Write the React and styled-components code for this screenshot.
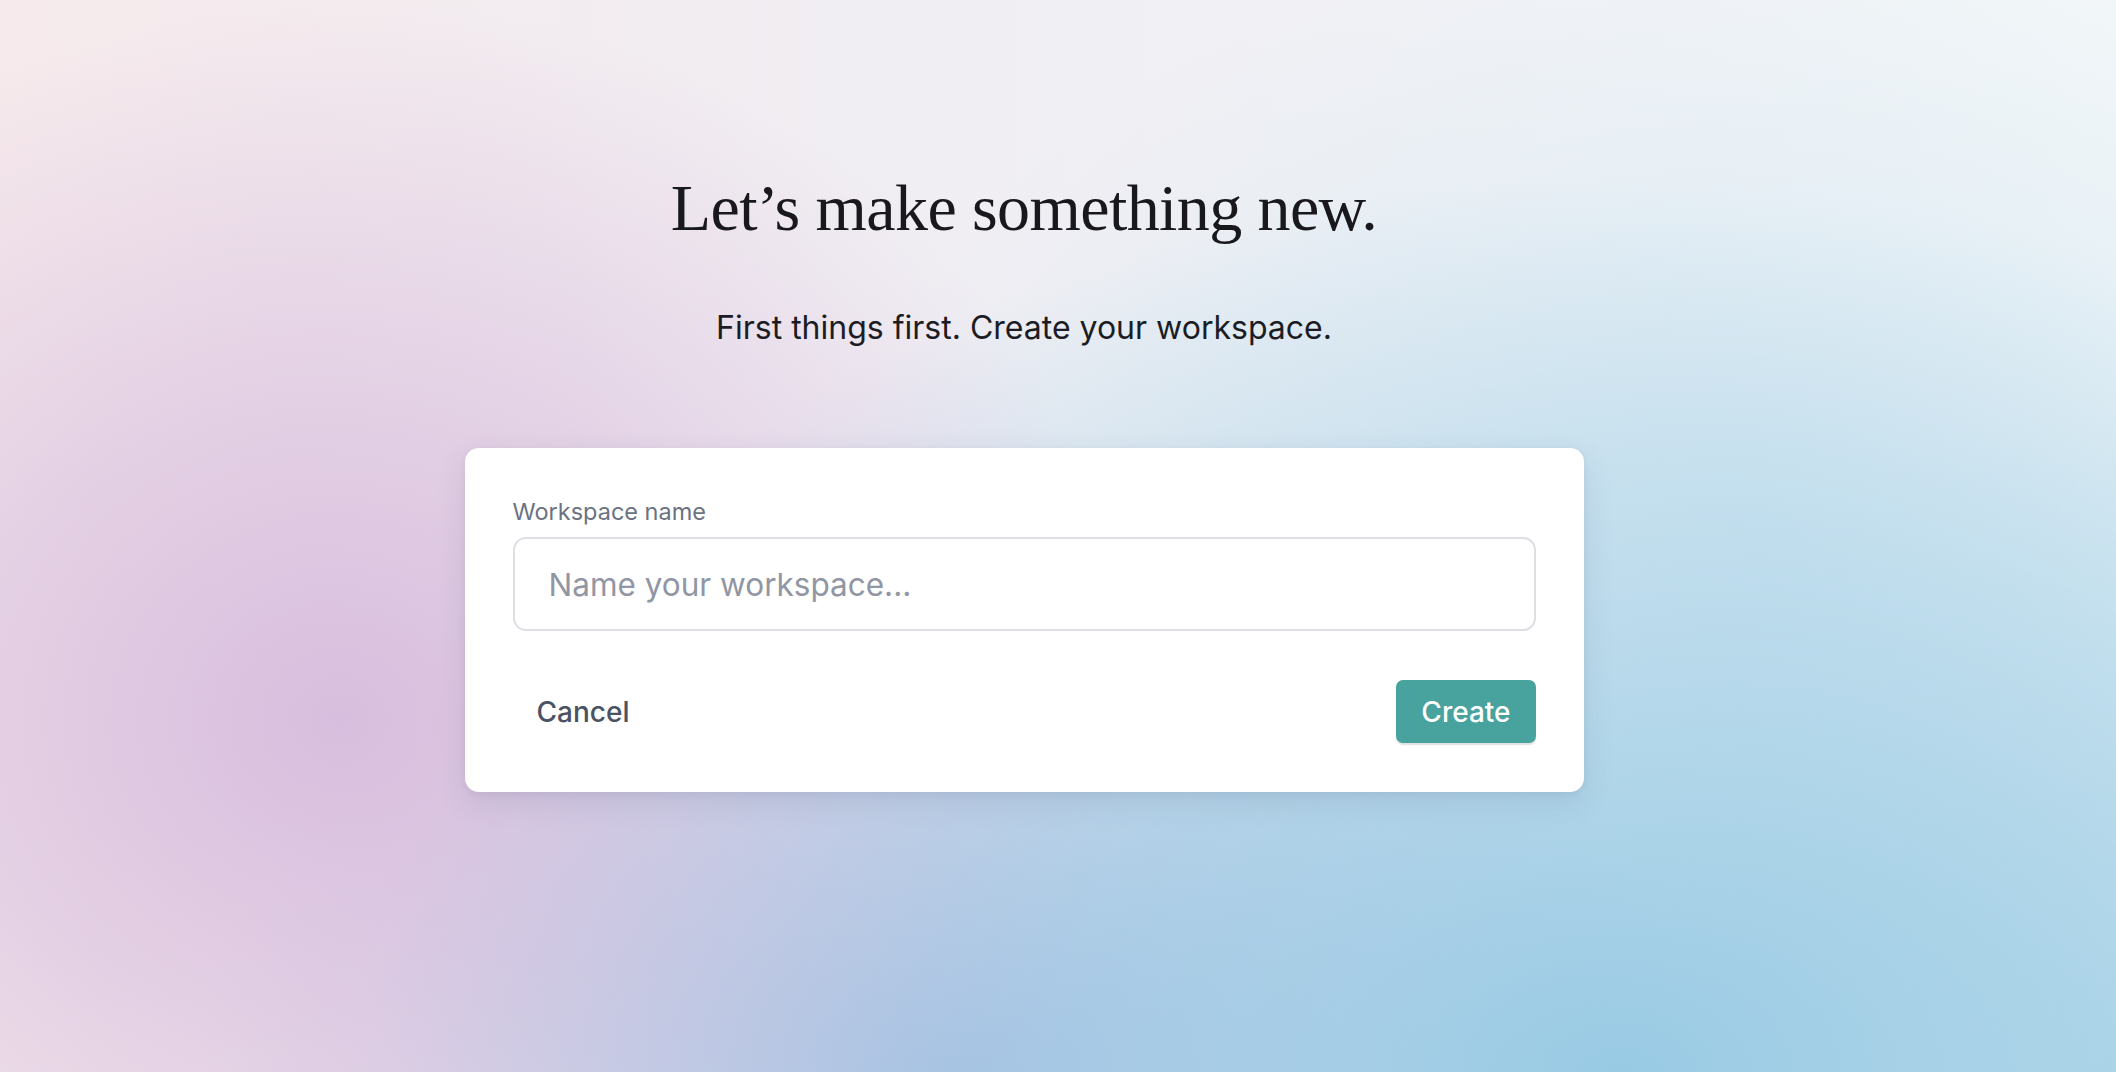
import React from "react";
import styled, { createGlobalStyle } from "styled-components";

const Global = createGlobalStyle`
  html, body { margin: 0; padding: 0; }
  body { font-family: Inter, "Noto Sans", sans-serif; }
  * { box-sizing: border-box; }
`;

const Page = styled.div`
  width: 2116px;
  height: 1072px;
  overflow: hidden;
  display: flex;
  flex-direction: column;
  align-items: center;
  padding: 168px 68px 0 0;
  background:
    radial-gradient(ellipse 1250px 900px at 1620px 1080px, rgba(152, 202, 228, 1) 0%, rgba(152, 202, 228, 0.55) 45%, rgba(152, 202, 228, 0) 100%),
    radial-gradient(ellipse 800px 720px at 340px 720px, rgba(216, 190, 222, 1) 0%, rgba(216, 190, 222, 0.6) 45%, rgba(216, 190, 222, 0) 100%),
    radial-gradient(ellipse 750px 520px at 950px 1072px, rgba(176, 190, 226, 1) 0%, rgba(176, 190, 226, 0) 100%),
    radial-gradient(ellipse 700px 650px at 2116px 1072px, rgba(200, 226, 238, 1) 0%, rgba(200, 226, 238, 0) 100%),
    radial-gradient(ellipse 900px 600px at 1750px 520px, rgba(214, 232, 242, 0.9) 0%, rgba(214, 232, 242, 0) 100%),
    linear-gradient(90deg, #f6eaec 0%, #f0eef3 45%, #f3f7f9 100%);
`;

const Heading = styled.h1`
  margin: 0;
  font-family: "Liberation Serif", "Times New Roman", serif;
  font-weight: 400;
  font-size: 66px;
  line-height: 79px;
  letter-spacing: -0.6px;
  color: #18181d;
`;

const Subtitle = styled.p`
  margin: 62px 0 0;
  font-family: Inter, sans-serif;
  font-size: 32px;
  line-height: 37px;
  color: #1c1d24;
`;

const Card = styled.div`
  margin-top: 102px;
  width: 1119px;
  background: #ffffff;
  border-radius: 14px;
  padding: 50px 48px 49px;
  box-shadow: 0 10px 30px rgba(60, 70, 110, 0.12), 0 2px 6px rgba(60, 70, 110, 0.06);
  display: flex;
  flex-direction: column;
`;

const Label = styled.label`
  font-size: 23.5px;
  line-height: 27px;
  color: #6b7280;
`;

const Input = styled.input`
  margin-top: 12px;
  height: 94px;
  width: 100%;
  border: 2px solid #dedfe4;
  border-radius: 13px;
  padding: 0 34px;
  font-family: Inter, sans-serif;
  font-size: 31.5px;
  color: #1c1d24;
  outline: none;
  background: #fff;
  &::placeholder { color: #9096a3; }
`;

const Actions = styled.div`
  margin-top: 49px;
  display: flex;
  justify-content: space-between;
  align-items: center;
`;

const Button = styled.button`
  height: 63px;
  padding: 0 ${(p) => (p.$primary ? "25px" : "24px")};
  border: none;
  border-radius: 7px;
  font-family: Inter, sans-serif;
  font-size: 28px;
  font-weight: 500;
  cursor: pointer;
  background: ${(p) => (p.$primary ? "#48a29d" : "transparent")};
  color: ${(p) => (p.$primary ? "#ffffff" : "#4b5262")};
  box-shadow: ${(p) => (p.$primary ? "0 2px 1px rgba(0,0,0,0.12)" : "none")};
`;

export default function App() {
  return (
    <>
      <Global />
      <Page>
        <Heading>Let’s make something new.</Heading>
        <Subtitle>First things first. Create your workspace.</Subtitle>
        <Card>
          <Label htmlFor="ws">Workspace name</Label>
          <Input id="ws" placeholder="Name your workspace..." />
          <Actions>
            <Button>Cancel</Button>
            <Button $primary>Create</Button>
          </Actions>
        </Card>
      </Page>
    </>
  );
}
